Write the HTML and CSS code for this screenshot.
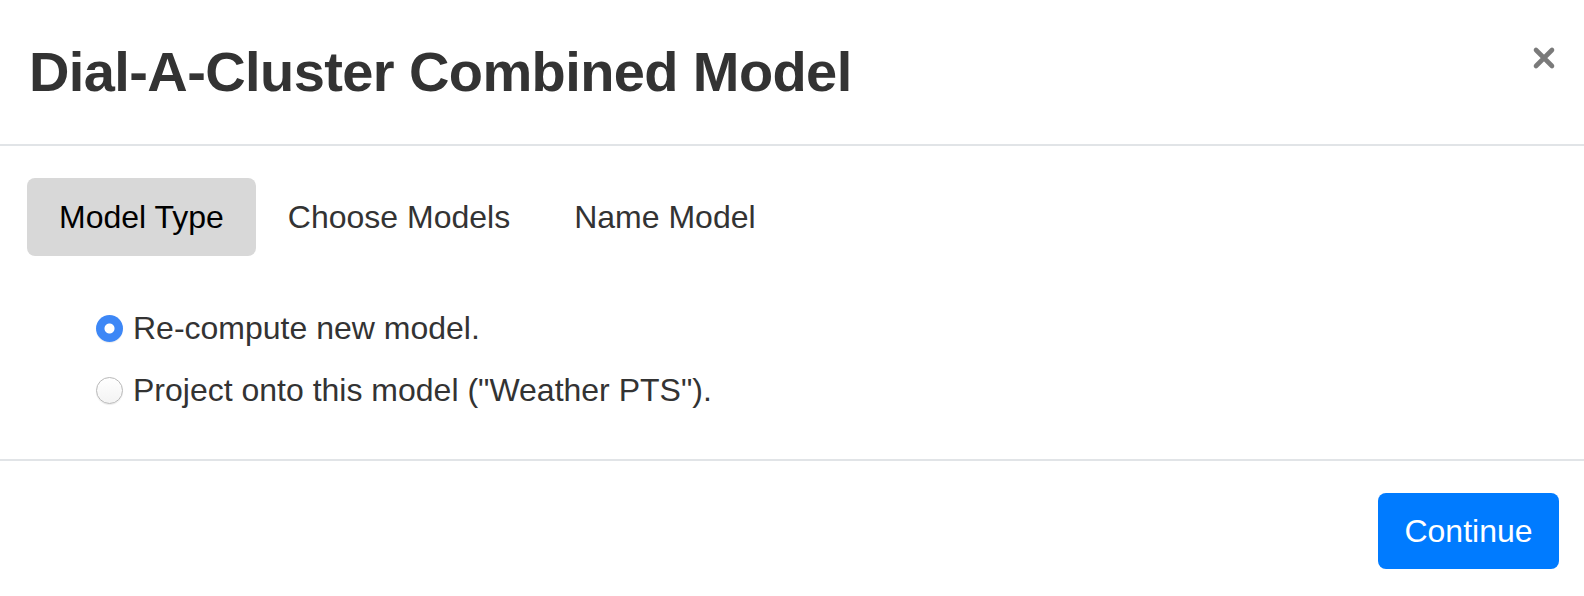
FILE: index.html
```html
<!DOCTYPE html>
<html>
<head>
<meta charset="utf-8">
<link rel="stylesheet" href="styles.css">
</head>
<body>
<div class="modal">
  <div class="modal-header">
    <h3 class="modal-title">Dial-A-Cluster Combined Model</h3>
    <button class="close" aria-label="Close">
      <svg width="24" height="24" viewBox="0 0 24 24"><path d="M4 4 L20 20 M20 4 L4 20" stroke="#7a7a7a" stroke-width="4.6" stroke-linecap="round"/></svg>
    </button>
  </div>
  <div class="modal-body">
    <div class="tabs">
      <a class="tab active">Model Type</a>
      <a class="tab">Choose Models</a>
      <a class="tab">Name Model</a>
    </div>
    <div class="options">
      <label class="option"><input type="radio" name="m" checked><span>Re-compute new model.</span></label>
      <label class="option"><input type="radio" name="m"><span>Project onto this model ("Weather PTS").</span></label>
    </div>
  </div>
  <div class="modal-footer">
    <button class="btn-primary">Continue</button>
  </div>
</div>
</body>
</html>
```
FILE: styles.css
```css
* { box-sizing: border-box; }
html, body { margin: 0; padding: 0; background: #fff; }
body { font-family: "Liberation Sans", Arial, sans-serif; color: #333; }
.modal { width: 1584px; height: 596px; display: flex; flex-direction: column; }
.modal-header {
  height: 146px;
  border-bottom: 2px solid #e1e4e7;
  display: flex;
  align-items: center;
  justify-content: space-between;
  padding: 0 28px 2px 29px;
}
.modal-title { margin: 0; font-size: 56px; font-weight: bold; color: #333; letter-spacing: -0.6px; }
.close { background: none; border: 0; padding: 0; margin-bottom: 26px; display: flex; }
.modal-body { height: 313px; padding: 32px 27px 0; }
.tabs { display: flex; }
.tab {
  font-size: 32px;
  color: #333;
  padding: 0 32px;
  height: 78px;
  line-height: 78px;
  border-radius: 8px;
}
.tab.active { background: #d8d8d8; color: #000; }
.options { margin-top: 41px; padding-left: 69px; display: flex; flex-direction: column; }
.option { display: flex; align-items: center; height: 62px; font-size: 32px; color: #333; }
.option input {
  appearance: none;
  -webkit-appearance: none;
  margin: 0 10px 0 0;
  width: 27px;
  height: 27px;
  border-radius: 50%;
  border: 1.5px solid #b8b8b8;
  background: linear-gradient(#ffffff, #f3f3f3);
  box-shadow: 0 1px 1px rgba(0,0,0,0.08);
  flex: none;
}
.option input:checked {
  border: 0;
  background: radial-gradient(circle, #fff 0 4.5px, #3d87f6 5.5px);
}
.modal-footer { flex: 1; border-top: 2px solid #e1e4e7; display: flex; justify-content: flex-end; align-items: flex-start; padding: 32px 25px 0 0; }
.btn-primary {
  background: #007bff;
  color: #fff;
  border: 0;
  border-radius: 8px;
  font-family: "Liberation Sans", Arial, sans-serif;
  font-size: 32px;
  width: 181px;
  height: 76px;
  padding: 0;
}
```
